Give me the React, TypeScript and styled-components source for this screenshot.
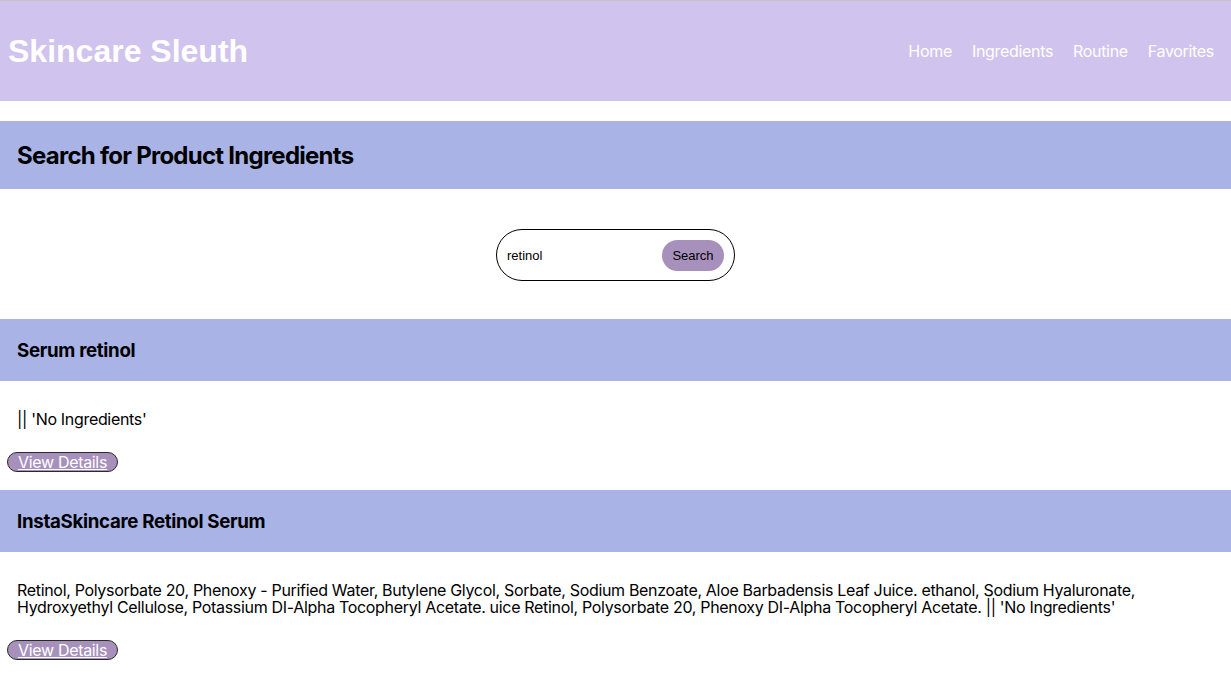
import React from "react";
import styled, { createGlobalStyle } from "styled-components";

const Global = createGlobalStyle`
  html, body { margin: 0; padding: 0; background: #fff; }
  body {
    font-family: Inter, "Noto Sans", sans-serif;
    letter-spacing: -0.02em;
    color: #000;
    border-top: 1px solid #c4c4c4;
  }
  * { box-sizing: border-box; }
`;

const Header = styled.header`
  height: 100px;
  background: #d0c4ee;
  display: flex;
  align-items: center;
  justify-content: space-between;
  padding: 0 17px 0 8px;
`;

const Logo = styled.h1`
  margin: 0;
  font-family: "Liberation Sans", Arial, sans-serif;
  letter-spacing: 0;
  font-size: 32px;
  font-weight: 700;
  color: #fff;
`;

const Nav = styled.nav`
  display: flex;
  gap: 20px;
`;

const NavLink = styled.a`
  color: #fff;
  font-size: 16px;
  text-decoration: none;
`;

const Band = styled.div<{ $tall?: boolean }>`
  background: #a9b3e6;
  height: ${(p) => (p.$tall ? "68px" : "62px")};
  display: flex;
  align-items: center;
  padding: 0 17px;
`;

const SectionTitle = styled.h2`
  margin: 0;
  font-size: 24px;
  font-weight: 700;
  letter-spacing: -0.031em;
`;

const CardTitle = styled.h3`
  margin: 0;
  font-size: 18.7px;
  font-weight: 700;
`;

const Main = styled.main`
  margin-top: 20px;
`;

const SearchArea = styled.div`
  display: flex;
  justify-content: center;
  padding: 40px 0 38px;
`;

const SearchForm = styled.form`
  width: 239px;
  height: 52px;
  border: 1px solid #000;
  border-radius: 26px;
  display: flex;
  align-items: center;
  padding: 0 10px;
  gap: 4px;
`;

const SearchInput = styled.input`
  flex: 1;
  min-width: 0;
  border: none;
  outline: none;
  background: transparent;
  font-family: "Liberation Sans", Arial, sans-serif;
  letter-spacing: 0;
  font-size: 13px;
  color: #000;
  padding: 0;
`;

const SearchButton = styled.button`
  width: 62px;
  height: 31px;
  border: none;
  border-radius: 16px;
  background: #a791bc;
  font-family: "Liberation Sans", Arial, sans-serif;
  letter-spacing: 0;
  font-size: 13px;
  color: #000;
  padding: 0;
`;

const Card = styled.section`
  display: flex;
  flex-direction: column;
  align-items: flex-start;
  padding-bottom: 18px;
`;

const Ingredients = styled.p`
  margin: 30px 17px 24px;
  font-size: 16px;
  line-height: 17px;
`;

const DetailsButton = styled.a`
  margin-left: 7px;
  height: 20px;
  width: 111px;
  display: flex;
  align-items: center;
  justify-content: center;
  background: #a791bc;
  border: 1px solid #2a2a2a;
  border-radius: 10px;
  color: #fff;
  font-size: 16px;
  text-decoration: underline;
`;

const products = [
  { name: "Serum retinol", ingredients: "|| 'No Ingredients'" },
  {
    name: "InstaSkincare Retinol Serum",
    ingredients:
      "Retinol, Polysorbate 20, Phenoxy - Purified Water, Butylene Glycol, Sorbate, Sodium Benzoate, Aloe Barbadensis Leaf Juice. ethanol, Sodium Hyaluronate, Hydroxyethyl Cellulose, Potassium DI-Alpha Tocopheryl Acetate. uice Retinol, Polysorbate 20, Phenoxy DI-Alpha Tocopheryl Acetate. || 'No Ingredients'",
  },
];

export default function App() {
  return (
    <>
      <Global />
      <Header>
        <Logo>Skincare Sleuth</Logo>
        <Nav>
          <NavLink href="#">Home</NavLink>
          <NavLink href="#">Ingredients</NavLink>
          <NavLink href="#">Routine</NavLink>
          <NavLink href="#">Favorites</NavLink>
        </Nav>
      </Header>
      <Main>
        <Band $tall>
          <SectionTitle>Search for Product Ingredients</SectionTitle>
        </Band>
        <SearchArea>
          <SearchForm onSubmit={(e) => e.preventDefault()}>
            <SearchInput defaultValue="retinol" />
            <SearchButton type="submit">Search</SearchButton>
          </SearchForm>
        </SearchArea>
        {products.map((p) => (
          <Card key={p.name}>
            <Band style={{ alignSelf: "stretch" }}>
              <CardTitle>{p.name}</CardTitle>
            </Band>
            <Ingredients>{p.ingredients}</Ingredients>
            <DetailsButton href="#">View Details</DetailsButton>
          </Card>
        ))}
      </Main>
    </>
  );
}
